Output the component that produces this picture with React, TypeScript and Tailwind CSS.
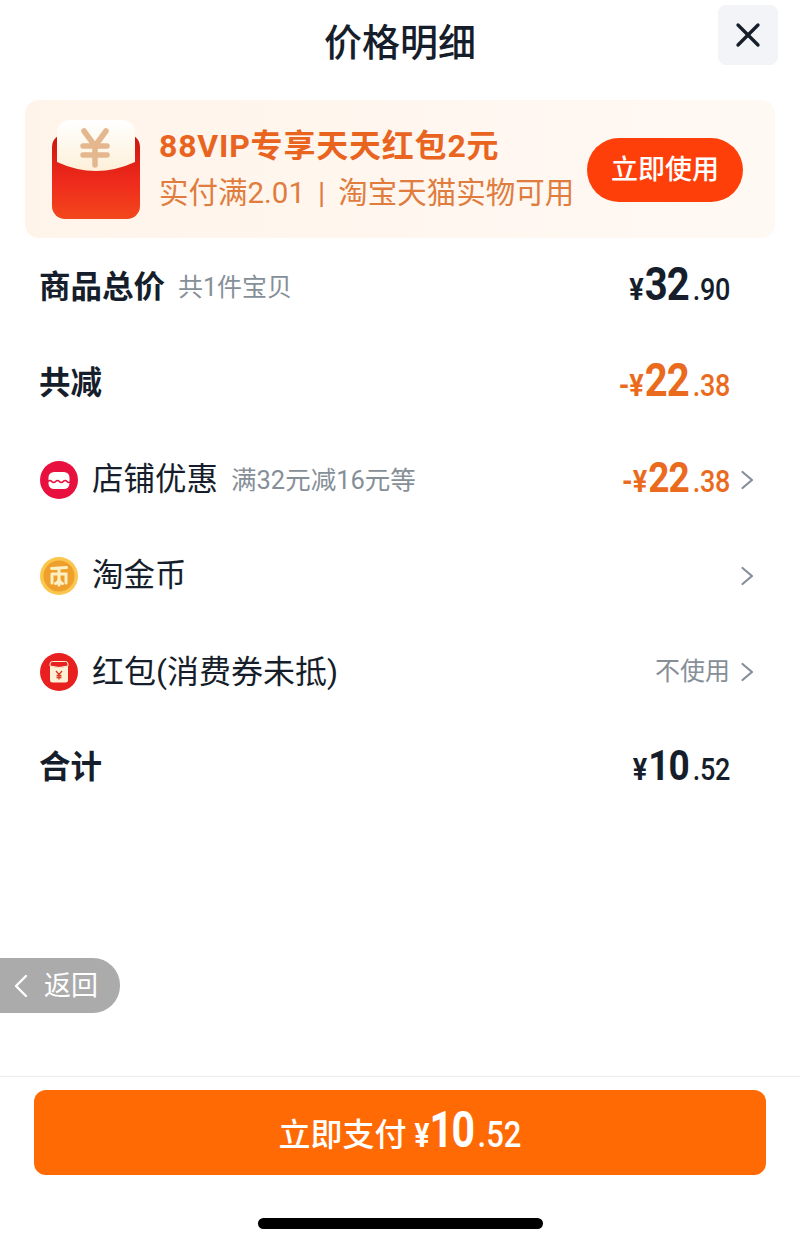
import React from 'react';
import { X } from 'lucide-react';

function Amount({ sign, big, cents, bigSize, color }: { sign: string; big: string; cents: string; bigSize: string; color: string }) {
  return (
    <div className={`flex items-baseline font-medium origin-bottom scale-y-[1.16] translate-y-[2px] ${color}`}>
      <span className="text-[27px] font-bold mr-[1px]">{sign}</span>
      <span className={`font-bold tracking-[-1px] ${bigSize}`}>{big}</span>
      <span className="text-[27px] ml-[4px] tracking-[-0.3px]">{cents}</span>
    </div>
  );
}

function Chevron() {
  return (
    <svg width="30" height="20" viewBox="0 0 30 20" className="shrink-0">
      <path d="M12.5 2 L22 10 L12.5 18" fill="none" stroke="#868f98" strokeWidth="2.2" strokeLinecap="round" strokeLinejoin="round" />
    </svg>
  );
}

function ShopIcon() {
  return (
    <svg width="38" height="38" viewBox="0 0 38 38">
      <circle cx="19" cy="19" r="19" fill="#e8103f" />
      <rect x="8.5" y="11" width="21" height="17" rx="5.5" fill="#fff" />
      <path d="M8 20.5 q1.9 -2 3.8 0 t3.8 0 t3.8 0 t3.8 0 t3.8 0 t3.8 0" fill="none" stroke="#e8103f" strokeWidth="1.7" />
    </svg>
  );
}

function CoinIcon() {
  return (
    <svg width="38" height="38" viewBox="0 0 38 38">
      <circle cx="19" cy="19" r="19" fill="#fbc64e" />
      <circle cx="19" cy="19" r="15.5" fill="#ee9f2c" />
      <path d="M11.5 11.5 L26.5 10.5 M19 11 V28 M12 17 H26 V26 M12 17 V26 M15.5 26.5 q3.5 -1 3.5 -6 M22.5 26.5 q-3.5 -1 -3.5 -6" fill="none" stroke="#fff0c4" strokeWidth="3" strokeLinecap="round" />
    </svg>
  );
}

function PacketIcon() {
  return (
    <svg width="38" height="38" viewBox="0 0 38 38">
      <circle cx="19" cy="19" r="19" fill="#e8201f" />
      <rect x="10" y="8.5" width="18" height="21" rx="2.5" fill="#fff1d8" />
      <path d="M10 11 a2.5 2.5 0 0 1 2.5 -2.5 H25.5 a2.5 2.5 0 0 1 2.5 2.5 V13 q-9 3 -18 0 Z" fill="#e8201f" stroke="#fff1d8" strokeWidth="1" />
      <path d="M16 18 L19 21.5 L22 18 M19 21.5 V26.5 M16.5 22.5 H21.5 M16.5 24.5 H21.5" fill="none" stroke="#d8391f" strokeWidth="1.3" />
    </svg>
  );
}

function EnvelopeIcon() {
  return (
    <svg width="90" height="102" viewBox="0 0 90 102" className="shrink-0">
      <defs>
        <linearGradient id="body" x1="0" y1="0" x2="0" y2="1">
          <stop offset="0" stopColor="#c9160d" />
          <stop offset="0.55" stopColor="#ee2a1c" />
          <stop offset="1" stopColor="#f4471d" />
        </linearGradient>
        <linearGradient id="flap" x1="0" y1="0" x2="0" y2="1">
          <stop offset="0" stopColor="#ffffff" />
          <stop offset="1" stopColor="#fdf0d9" />
        </linearGradient>
      </defs>
      <rect x="1" y="16" width="88" height="85" rx="13" fill="url(#body)" />
      <path d="M6 14 a12 12 0 0 1 12 -12 H72 a12 12 0 0 1 12 12 V44 q-39 18 -78 0 Z" fill="url(#flap)" />
      <path d="M33 13 L44 28 L55 13 M44 28 V47 M32 28 H56 M32 37 H56" fill="none" stroke="#e5b78f" strokeWidth="5.5" strokeLinecap="round" />
    </svg>
  );
}

const App = () => {
  return (
    <div className="relative w-[800px] h-[1245px] flex flex-col bg-white text-[#161e2b] font-['Roboto','Noto_Sans_CJK_SC',sans-serif]">
      <header className="relative h-[100px] flex justify-center pt-[15px] shrink-0">
        <h1 className="text-[38px] leading-[56px] font-medium">价格明细</h1>
        <button className="absolute right-[22px] top-[5px] w-[60px] h-[60px] rounded-[8px] bg-[#f2f4f7] flex items-center justify-center">
          <X size={40} strokeWidth={2} className="text-[#161e2b] -mt-[1px]" />
        </button>
      </header>

      <section className="mx-[25px] h-[138px] rounded-[14px] bg-gradient-to-r from-[#fff4ea] to-[#fff9f4] flex items-center pl-[26px] pr-[32px] shrink-0">
        <EnvelopeIcon />
        <div className="ml-[18px] flex-1">
          <div className="text-[32px] leading-[44px] font-bold text-[#e8641f] tracking-[0.8px] whitespace-nowrap">88VIP专享天天红包2元</div>
          <div className="text-[29.5px] leading-[44px] text-[#e07d3e] mt-[3px] whitespace-nowrap">
            实付满2.01<span className="mx-[13px]">|</span>淘宝天猫实物可用
          </div>
        </div>
        <button className="w-[156px] h-[64px] mt-[1px] pt-[1px] shrink-0 rounded-full bg-[#fe3f0a] text-white text-[27px] font-medium">立即使用</button>
      </section>

      <main className="flex flex-col mt-[2px]">
        <div className="h-[96px] flex items-center pl-[39px] pr-[70px]">
          <span className="text-[31.5px] font-bold">商品总价</span>
          <span className="ml-[13px] text-[25px] text-[#868f98]">共1件宝贝</span>
          <div className="ml-auto">
            <Amount sign="¥" big="32" cents=".90" bigSize="text-[40px]" color="text-[#161e2b]" />
          </div>
        </div>
        <div className="h-[96px] flex items-center pl-[39px] pr-[70px]">
          <span className="text-[31.5px] font-bold">共减</span>
          <div className="ml-auto">
            <Amount sign="-¥" big="22" cents=".38" bigSize="text-[40px]" color="text-[#ea6a1e]" />
          </div>
        </div>
        <div className="h-[96px] flex items-center pl-[40px] pr-[40px]">
          <ShopIcon />
          <span className="ml-[14px] text-[31.5px]">店铺优惠</span>
          <span className="ml-[13px] text-[25.5px] text-[#868f98]">满32元减16元等</span>
          <div className="ml-auto">
            <Amount sign="-¥" big="22" cents=".38" bigSize="text-[37px]" color="text-[#ea6a1e]" />
          </div>
          <Chevron />
        </div>
        <div className="h-[96px] flex items-center pl-[40px] pr-[40px]">
          <CoinIcon />
          <span className="ml-[14px] text-[31.5px]">淘金币</span>
          <div className="ml-auto">
            <Chevron />
          </div>
        </div>
        <div className="h-[96px] flex items-center pl-[40px] pr-[40px]">
          <PacketIcon />
          <span className="ml-[14px] text-[32px]">红包(消费券未抵)</span>
          <span className="ml-auto text-[25px] text-[#868f98]">不使用</span>
          <Chevron />
        </div>
        <div className="h-[96px] flex items-center pl-[39px] pr-[70px]">
          <span className="text-[31.5px] font-bold">合计</span>
          <div className="ml-auto">
            <Amount sign="¥" big="10" cents=".52" bigSize="text-[37px]" color="text-[#161e2b]" />
          </div>
        </div>
      </main>

      <div className="absolute left-0 top-[958px] w-[120px] h-[55px] rounded-r-[27px] bg-[#ababab] flex items-center text-white">
        <svg width="14" height="24" viewBox="0 0 14 24" className="ml-[14px]">
          <path d="M12 2 L2 12 L12 22" fill="none" stroke="#fff" strokeWidth="2.4" strokeLinecap="round" strokeLinejoin="round" />
        </svg>
        <span className="ml-[16px] text-[27px] pt-[1px]">返回</span>
      </div>

      <footer className="mt-auto border-t border-[#ececee] h-[169px] px-[34px] pt-[13px] flex flex-col items-center shrink-0">
        <button className="w-full h-[85px] rounded-[12px] bg-[#ff6a04] text-white flex items-baseline justify-center pt-[12px]">
          <span className="text-[32px] font-medium">立即支付</span>
          <span className="flex items-baseline origin-bottom scale-y-[1.2] translate-y-[5px]">
            <span className="ml-[8px] text-[28px] font-bold">¥</span>
            <span className="text-[41px] font-bold tracking-[-1.5px]">10</span>
            <span className="ml-[4px] text-[31px] font-medium">.52</span>
          </span>
        </button>
        <div className="mt-[43px] w-[285px] h-[11px] rounded-full bg-black" />
      </footer>
    </div>
  );
};

export default App;
